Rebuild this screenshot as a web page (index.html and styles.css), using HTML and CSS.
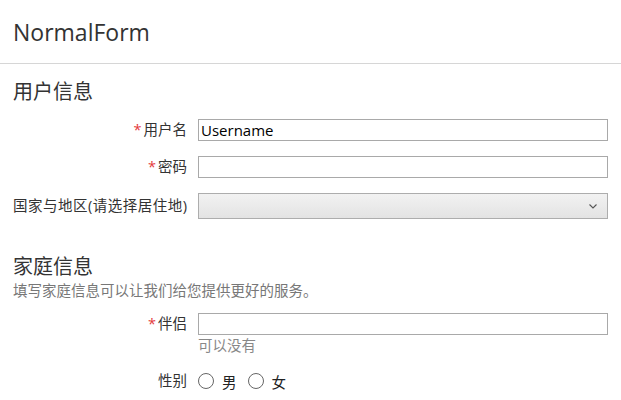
FILE: index.html
```html
<!DOCTYPE html>
<html lang="zh-CN">
<head>
<meta charset="utf-8">
<title>NormalForm</title>
<link rel="stylesheet" href="styles.css">
</head>
<body>
<header class="page-header"><h1 class="title">NormalForm</h1></header>
<main class="content">
  <section class="section">
    <h2 class="section-title">用户信息</h2>
    <div class="row">
      <label class="label"><span class="req">*</span>用户名</label>
      <input class="field" type="text" value="Username">
    </div>
    <div class="row">
      <label class="label"><span class="req">*</span>密码</label>
      <input class="field" type="password">
    </div>
    <div class="row">
      <label class="label label-long">国家与地区(请选择居住地)</label>
      <select class="select"><option></option></select>
    </div>
  </section>
  <section class="section section-family">
    <h2 class="section-title">家庭信息</h2>
    <p class="section-desc">填写家庭信息可以让我们给您提供更好的服务。</p>
    <div class="row row-help">
      <label class="label"><span class="req">*</span>伴侣</label>
      <div class="control">
        <input class="field" type="text">
        <div class="help">可以没有</div>
      </div>
    </div>
    <div class="row">
      <label class="label">性别</label>
      <div class="radios">
        <label class="radio"><input type="radio" name="g"><span>男</span></label>
        <label class="radio"><input type="radio" name="g"><span>女</span></label>
      </div>
    </div>
  </section>
</main>
</body>
</html>
```
FILE: styles.css
```css
* { box-sizing: border-box; }
html, body { margin: 0; padding: 0; background: #fff; }
body {
  font-family: "Open Sans", "Noto Sans CJK SC", sans-serif;
  color: #333;
  font-size: 14.5px;
}
.page-header {
  height: 64px;
  border-bottom: 1px solid #d6d6d6;
  display: flex;
  align-items: center;
  padding: 0 13px;
}
.title {
  margin: 0;
  font-size: 23px;
  font-weight: 400;
  color: #333;
  line-height: 30px;
}
.content { padding: 0 13px; }
.section-title {
  margin: 0;
  font-size: 20px;
  font-weight: 400;
  line-height: 28px;
  color: #333;
}
.section:first-child .section-title { margin-top: 14px; margin-bottom: 13px; }
.section-family { margin-top: 34px; }
.section-desc {
  margin: 0 0 12px;
  font-size: 14.5px;
  color: #777;
  line-height: 20px;
}
.row {
  display: grid;
  grid-template-columns: 174px 410px;
  column-gap: 11px;
  align-items: center;
  margin-bottom: 15px;
}
.row-help { align-items: start; }
.row-help .label { line-height: 22px; }
.label {
  text-align: right;
  white-space: nowrap;
  color: #333;
  line-height: 20px;
}
.label-long { letter-spacing: 0.5px; }
.req { color: #e4393c; margin-right: 2px; }
.field {
  display: block;
  width: 410px;
  height: 22px;
  border: 1px solid #a9a9a9;
  padding: 0 2px;
  font-family: "Open Sans", "Noto Sans CJK SC", sans-serif;
  font-size: 15px;
  color: #000;
  outline: none;
  margin: 0;
}
.select {
  display: block;
  width: 410px;
  height: 26px;
  border: 1px solid #adadad;
  margin: 0;
  -webkit-appearance: none;
  appearance: none;
  background-color: #ececec;
  background-image: url("data:image/svg+xml;utf8,<svg xmlns='http://www.w3.org/2000/svg' width='8' height='5' viewBox='0 0 8 5'><path d='M0.5 0.5 L4 4 L7.5 0.5' fill='none' stroke='%23555' stroke-width='1.1'/></svg>"), linear-gradient(#f2f2f2, #e3e3e3);
  background-repeat: no-repeat, no-repeat;
  background-position: right 10px center, 0 0;
  border-radius: 0;
}
.help {
  color: #888;
  font-size: 14.5px;
  line-height: 20px;
  margin-top: 1px;
}
.radios { display: flex; align-items: center; height: 20px; }
.radio { display: flex; align-items: center; margin-right: 11px; color: #222; }
.radio input {
  -webkit-appearance: none;
  appearance: none;
  width: 16px;
  height: 16px;
  border: 1px solid #666;
  border-radius: 50%;
  margin: 0 8px 0 0;
  background: #fff;
}
```
